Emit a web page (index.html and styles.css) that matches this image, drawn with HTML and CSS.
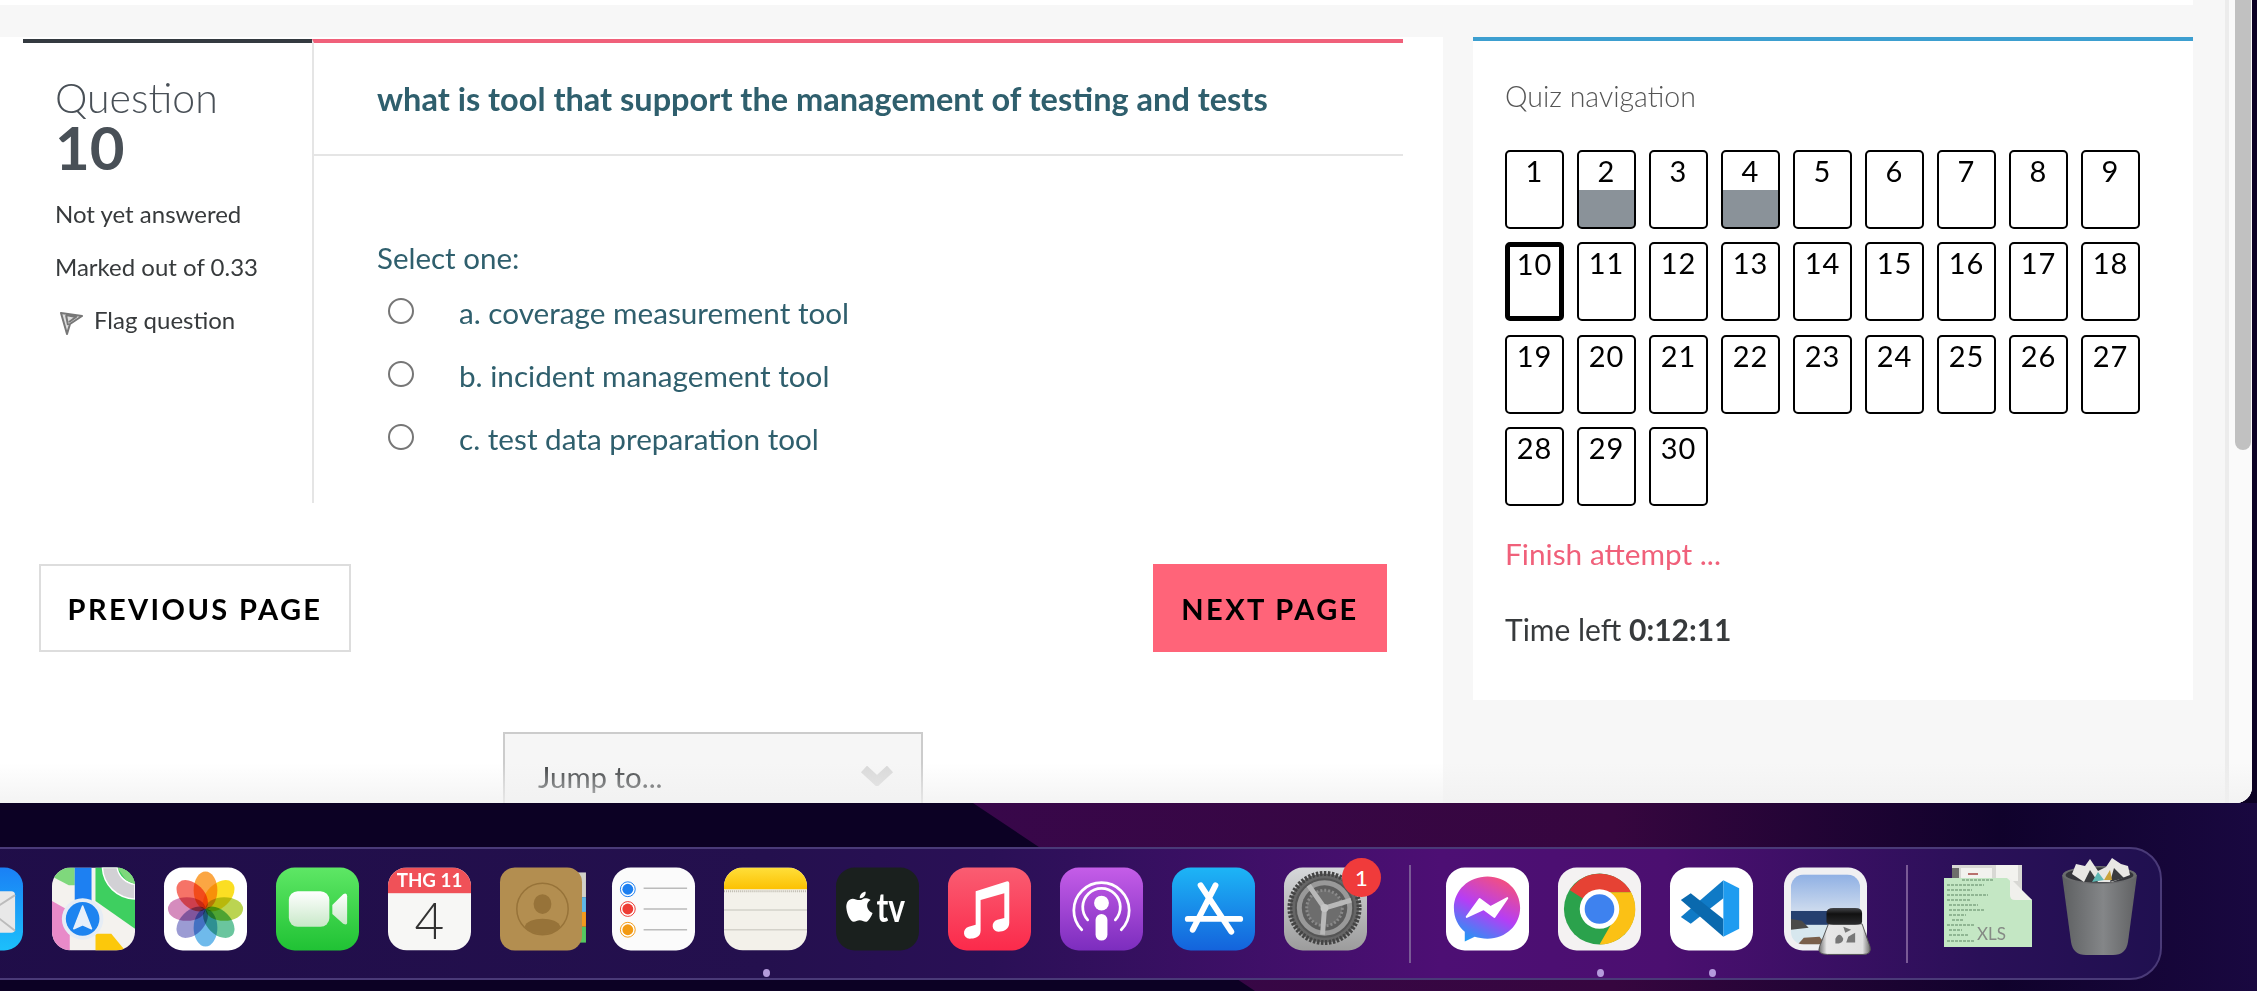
FILE: index.html
```html
<!DOCTYPE html>
<html lang="en">
<head>
    <meta charset="UTF-8">
    <title>Quiz attempt</title>
    <link rel="stylesheet" href="styles.css">
</head>
<body>
    <!-- desktop wallpaper -->
    <svg class="wallpaper" viewBox="0 0 2257 991">
        <defs>
            <linearGradient id="wallPurple" gradientUnits="userSpaceOnUse" x1="970" y1="0" x2="2257" y2="0">
                <stop offset="0" stop-color="#38074a"/>
                <stop offset=".5" stop-color="#36063f"/>
                <stop offset=".8" stop-color="#10022c"/>
                <stop offset="1" stop-color="#190840"/>
            </linearGradient>
        </defs>
        <rect width="2257" height="991" fill="#0c0124"/>
        <polygon points="973,803 2257,803 2257,991 1255,991" fill="url(#wallPurple)"/>
    </svg>

    <div class="window">
        <div class="page">
            <div class="strip"></div>
            <div class="columns">
                <main class="main">
                    <section class="question">
                        <div class="info">
                            <h3 class="qno">Question <span>10</span></h3>
                            <p class="state">Not yet answered</p>
                            <p class="state">Marked out of 0.33</p>
                            <p class="state flag">
                                <svg class="flag-icon" viewBox="0 0 24 24"><path d="M2 2 L23 5 L11 13 L8 23 Z M7 4 L9 14 M7 4 L17 6 L10 11" fill="#ddd" stroke="#777" stroke-width="2" stroke-linejoin="round"/></svg>
                                Flag question
                            </p>
                        </div>
                        <div class="content">
                            <div class="qtext">what is tool that support the management of testing and tests</div>
                            <div class="answers">
                                <div class="prompt">Select one:</div>
                                <label class="option"><span class="radio"></span>a. coverage measurement tool</label>
                                <label class="option"><span class="radio"></span>b. incident management tool</label>
                                <label class="option"><span class="radio"></span>c. test data preparation tool</label>
                            </div>
                        </div>
                    </section>
                    <div class="page-nav">
                        <a class="btn btn-prev">PREVIOUS PAGE</a>
                        <a class="btn btn-next">NEXT PAGE</a>
                    </div>
                    <div class="jump">
                        Jump to...
                        <svg class="chevron" viewBox="0 0 34 20"><polyline points="4,3 17,15 30,3" fill="none" stroke="#d8d8d8" stroke-width="9"/></svg>
                    </div>
                </main>
                <aside class="side">
                    <h4 class="nav-title">Quiz navigation</h4>
                    <div class="nav-grid">
                        <a class="cell">1</a>
                        <a class="cell answered">2</a>
                        <a class="cell">3</a>
                        <a class="cell answered">4</a>
                        <a class="cell">5</a>
                        <a class="cell">6</a>
                        <a class="cell">7</a>
                        <a class="cell">8</a>
                        <a class="cell">9</a>
                        <a class="cell current">10</a>
                        <a class="cell">11</a>
                        <a class="cell">12</a>
                        <a class="cell">13</a>
                        <a class="cell">14</a>
                        <a class="cell">15</a>
                        <a class="cell">16</a>
                        <a class="cell">17</a>
                        <a class="cell">18</a>
                        <a class="cell">19</a>
                        <a class="cell">20</a>
                        <a class="cell">21</a>
                        <a class="cell">22</a>
                        <a class="cell">23</a>
                        <a class="cell">24</a>
                        <a class="cell">25</a>
                        <a class="cell">26</a>
                        <a class="cell">27</a>
                        <a class="cell">28</a>
                        <a class="cell">29</a>
                        <a class="cell">30</a>
                    </div>
                    <a class="finish">Finish attempt ...</a>
                    <div class="timer">Time left <b>0:12:11</b></div>
                </aside>
            </div>
        </div>
        <div class="scrollbar"><div class="thumb"></div></div>
    </div>

    <div class="dock">
        <!-- mail -->
        <div class="app">
            <svg viewBox="0 0 84 84">
                <defs><linearGradient id="mailBg" x1="0" y1="0" x2="0" y2="1"><stop offset="0" stop-color="#1a80f5"/><stop offset="1" stop-color="#1cc0fb"/></linearGradient></defs>
                <rect width="84" height="84" rx="19" fill="url(#mailBg)"/>
                <rect x="8" y="24" width="68" height="42" rx="4" fill="#e8e8e8"/>
                <path d="M8 28 L42 50 L76 28 M8 64 L34 44 M76 64 L50 44" fill="none" stroke="#bbb" stroke-width="2"/>
            </svg>
        </div>
        <!-- maps -->
        <div class="app">
            <svg viewBox="0 0 84 84">
                <clipPath id="mapsClip"><rect width="84" height="84" rx="19"/></clipPath>
                <g clip-path="url(#mapsClip)">
                    <rect width="84" height="84" fill="#f4f2ee"/>
                    <polygon points="0,0 23,0 23,18 17,18 0,9" fill="#7fd87c"/>
                    <polygon points="44,0 84,0 84,62 44,34" fill="#3ecf60"/>
                    <path d="M51 0 C52 18 66 31 84 32 V17 C75 16 67 9 66 0 Z" fill="#d2d1d5" stroke="#fff" stroke-width="1.500"/>
                    <polygon points="66,0 84,0 84,17 75,13" fill="#7fd87c"/>
                    <rect x="23" y="0" width="17" height="36" fill="#1d80f2"/>
                    <polygon points="0,34 18,44 18,84 0,84" fill="#e88ac9"/>
                    <polygon points="44,67 60,67 74,84 44,84" fill="#fcc80b"/>
                    <circle cx="31" cy="52" r="21" fill="#e6edf5"/>
                    <circle cx="31" cy="52" r="17" fill="#1d84f0"/>
                    <polygon points="31,39 40,62 31,58 22,62" fill="#e8f0fa" stroke="#e8f0fa" stroke-linejoin="round" stroke-width="1.500"/>
                </g>
            </svg>
        </div>
        <!-- photos -->
        <div class="app">
            <svg viewBox="0 0 84 84">
                <rect width="84" height="84" rx="19" fill="#fff"/>
                <ellipse class="petal" cx="42" cy="23" rx="12" ry="19" fill="#fb9f33"/>
                <ellipse class="petal" cx="42" cy="23" rx="12" ry="19" fill="#fbdc10" transform="rotate(45 42 42)"/>
                <ellipse class="petal" cx="42" cy="23" rx="12" ry="19" fill="#b5d142" transform="rotate(90 42 42)"/>
                <ellipse class="petal" cx="42" cy="23" rx="12" ry="19" fill="#5dc096" transform="rotate(135 42 42)"/>
                <ellipse class="petal" cx="42" cy="23" rx="12" ry="19" fill="#63b4ea" transform="rotate(180 42 42)"/>
                <ellipse class="petal" cx="42" cy="23" rx="12" ry="19" fill="#9392d0" transform="rotate(225 42 42)"/>
                <ellipse class="petal" cx="42" cy="23" rx="12" ry="19" fill="#d282b8" transform="rotate(270 42 42)"/>
                <ellipse class="petal" cx="42" cy="23" rx="12" ry="19" fill="#f6675a" transform="rotate(315 42 42)"/>
            </svg>
        </div>
        <!-- facetime -->
        <div class="app">
            <svg viewBox="0 0 84 84">
                <defs><linearGradient id="ftBg" x1="0" y1="0" x2="0" y2="1"><stop offset="0" stop-color="#5ee765"/><stop offset="1" stop-color="#20c234"/></linearGradient>
                <linearGradient id="ftCam" x1="0" y1="0" x2="0" y2="1"><stop offset="0" stop-color="#fff"/><stop offset="1" stop-color="#c8e8c8"/></linearGradient></defs>
                <rect width="84" height="84" rx="19" fill="url(#ftBg)"/>
                <rect x="13" y="24" width="41" height="36" rx="9" fill="url(#ftCam)"/>
                <path d="M57 38 L68 27 Q72 25 72 29 V56 Q72 59 68 57 L57 47 Z" fill="url(#ftCam)"/>
            </svg>
        </div>
        <!-- calendar -->
        <div class="app">
            <svg viewBox="0 0 84 84">
                <clipPath id="calClip"><rect width="84" height="84" rx="19"/></clipPath>
                <g clip-path="url(#calClip)">
                    <rect width="84" height="84" fill="#f7f7f5"/>
                    <rect width="84" height="26" fill="#f05158"/>
                </g>
                <text x="42" y="20" class="cal-month">THG 11</text>
                <text x="42" y="72" class="cal-day">4</text>
            </svg>
        </div>
        <!-- contacts -->
        <div class="app">
            <svg viewBox="0 0 84 84">
                <rect x="76" y="5" width="11" height="25" fill="#d2d1c9"/>
                <rect x="76" y="30" width="11" height="15" fill="#5fb7e8"/>
                <rect x="76" y="45" width="11" height="15" fill="#f39a1e"/>
                <rect x="76" y="60" width="11" height="16" fill="#55c860"/>
                <rect width="83" height="84" rx="15" fill="#b38e50"/>
                <circle cx="43" cy="42" r="26" fill="none" stroke="#977339" stroke-width="1.500"/>
                <ellipse cx="43" cy="37" rx="9" ry="10" fill="#977339"/>
                <path d="M25 60 C27 49 59 49 61 60 C55 70 31 70 25 60 Z" fill="#977339"/>
            </svg>
        </div>
        <!-- reminders -->
        <div class="app">
            <svg viewBox="0 0 84 84">
                <rect width="84" height="84" rx="19" fill="#fbfbfb"/>
                <circle cx="16" cy="22" r="7.500" fill="#fff" stroke="#1c7ff0"/><circle cx="16" cy="22" r="5.500" fill="#1c7ff0"/>
                <circle cx="16" cy="42" r="7.500" fill="#fff" stroke="#ee3c34"/><circle cx="16" cy="42" r="5.500" fill="#ee3c34"/>
                <circle cx="16" cy="63" r="7.500" fill="#fff" stroke="#f29a14"/><circle cx="16" cy="63" r="5.500" fill="#f29a14"/>
                <path d="M32 21 H76 M32 42 H76 M32 63 H76" stroke="#bbb" stroke-width="1.600"/>
            </svg>
        </div>
        <!-- notes -->
        <div class="app">
            <svg viewBox="0 0 84 84">
                <defs><linearGradient id="notesTop" x1="0" y1="0" x2="0" y2="1"><stop offset="0" stop-color="#ffdf3a"/><stop offset="1" stop-color="#fcc102"/></linearGradient></defs>
                <clipPath id="notesClip"><rect width="84" height="84" rx="19"/></clipPath>
                <g clip-path="url(#notesClip)">
                    <rect width="84" height="84" fill="#f3f1ea"/>
                    <rect width="84" height="22" fill="url(#notesTop)"/>
                    <path d="M0 24 H84" stroke="#bdb9ae" stroke-width="2" stroke-dasharray="1 1"/>
                    <path d="M0 43 H84 M0 63 H84" stroke="#d4d2ca" stroke-width="1.400"/>
                </g>
            </svg>
            <span class="dot"></span>
        </div>
        <!-- tv -->
        <div class="app">
            <svg viewBox="0 0 84 84">
                <rect width="84" height="84" rx="19" fill="#1a201e"/>
                <path d="M24 33 C21 33 19 31.500 17 31.500 C13 31.500 10 35 10.500 41 C11 47 14.500 55 18 55 C20 55 21.500 53.500 24 53.500 C26.500 53.500 28 55 30 55 C33 55 36 49 37 46 C33 44.500 31.500 41 31.500 38.500 C31.500 36 33 34 35 33 C33 31 31 31 29.500 31 C27.500 31 26 33 24 33 Z M24 31 C24 27 27 24.500 30 24.500 C30.500 28 27.500 31.500 24 31 Z" fill="#fff"/>
                <text x="41" y="55" class="tv-label" textLength="29" lengthAdjust="spacingAndGlyphs">tv</text>
            </svg>
        </div>
        <!-- music -->
        <div class="app">
            <svg viewBox="0 0 84 84">
                <defs><linearGradient id="musicBg" x1="0" y1="0" x2="0" y2="1"><stop offset="0" stop-color="#fa5d72"/><stop offset="1" stop-color="#fb2a4b"/></linearGradient></defs>
                <rect width="84" height="84" rx="19" fill="url(#musicBg)"/>
                <path d="M28 24 L60 14 Q62 14 62 16 V56 C62 63 56 65 51 65 C44 65 43 55 50 53 L57 51 V26 L33 33 V64 C33 71 26 72 22 72 C15 72 14 62 21 60 L28 58 Z" fill="#fff"/>
            </svg>
        </div>
        <!-- podcasts -->
        <div class="app">
            <svg viewBox="0 0 84 84">
                <defs><linearGradient id="podBg" x1="0" y1="0" x2="0" y2="1"><stop offset="0" stop-color="#c55de8"/><stop offset="1" stop-color="#7c2dbe"/></linearGradient></defs>
                <rect width="84" height="84" rx="19" fill="url(#podBg)"/>
                <path d="M28 53 A19 19 0 1 1 56 53 M22 63 A28 28 0 1 1 62 63" fill="none" stroke="#fff" stroke-width="2.800" stroke-linecap="round"/>
                <circle cx="42" cy="36" r="7.500" fill="#fff"/>
                <rect x="36" y="47" width="12" height="27" rx="6" fill="#fff"/>
            </svg>
        </div>
        <!-- app store -->
        <div class="app">
            <svg viewBox="0 0 84 84">
                <defs><linearGradient id="storeBg" x1="0" y1="0" x2="0" y2="1"><stop offset="0" stop-color="#1db5f6"/><stop offset="1" stop-color="#1463dc"/></linearGradient></defs>
                <rect width="84" height="84" rx="19" fill="url(#storeBg)"/>
                <path d="M44 18 L21 63 M29 18 L60 65 M16 52 H69" fill="none" stroke="#fff" stroke-width="6" stroke-linecap="round"/>
            </svg>
        </div>
        <!-- system preferences -->
        <div class="app">
            <svg viewBox="0 0 84 84">
                <defs><linearGradient id="sysBg" x1="0" y1="0" x2="0" y2="1"><stop offset="0" stop-color="#d6d8da"/><stop offset="1" stop-color="#9c9c9c"/></linearGradient></defs>
                <rect width="84" height="84" rx="19" fill="url(#sysBg)"/>
                <circle cx="41" cy="41" r="35" fill="#666" stroke="#444" stroke-width="5" stroke-dasharray="2.500 1.500"/>
                <circle cx="41" cy="41" r="29" fill="#999" stroke="#555" stroke-width="2"/>
                <circle cx="41" cy="41" r="23" fill="#5d5d5d"/>
                <circle cx="41" cy="41" r="18" fill="#6d6d6d" stroke="#8a8a8a" stroke-width="3" stroke-dasharray="2 2"/>
                <path d="M41 41 L25 18 M41 41 L68 33 M41 41 L39 68" stroke="#b8b8b8" stroke-width="5"/>
                <circle cx="41" cy="41" r="4" fill="#c4c4c4"/>
            </svg>
            <span class="badge">1</span>
        </div>
        <div class="divider divider-first"></div>
        <!-- messenger -->
        <div class="app">
            <svg viewBox="0 0 84 84">
                <defs><linearGradient id="msgBg" x1=".7" y1="0" x2=".2" y2="1"><stop offset="0" stop-color="#f5507c"/><stop offset=".5" stop-color="#b53ef5"/><stop offset="1" stop-color="#1c9bf5"/></linearGradient></defs>
                <rect width="84" height="84" rx="19" fill="#fff"/>
                <path d="M42 9 C23 9 8 23 8 41 C8 51 12 59 19 65 V75 L29 70 C33 71 37 72 42 72 C61 72 75 58 75 41 C75 23 61 9 42 9 Z" fill="url(#msgBg)"/>
                <path d="M21 50 L34 32 L45 40 L62 31 L49 50 L38 42 Z" fill="#fff" stroke="#fff" stroke-linejoin="round" stroke-width="2"/>
            </svg>
        </div>
        <!-- chrome -->
        <div class="app">
            <svg viewBox="0 0 84 84">
                <rect width="84" height="84" rx="19" fill="#f4f2f2"/>
                <circle cx="42" cy="42" r="36" fill="#2ba24c"/>
                <path d="M42 42 L12 23 A36 36 0 0 1 74 25 H42 Z" fill="#e64234"/>
                <path d="M74 25 A36 36 0 0 1 42 78 L58 50 L42 25 Z" fill="#fbc115"/>
                <circle cx="42" cy="42" r="20" fill="#fff"/>
                <circle cx="42" cy="42" r="15" fill="#3e82ef"/>
            </svg>
            <span class="dot"></span>
        </div>
        <!-- vscode -->
        <div class="app">
            <svg viewBox="0 0 84 84">
                <rect width="84" height="84" rx="19" fill="#fff"/>
                <path d="M54 13 V31 L21 57 L11 50 Z" fill="#0f7ac6"/>
                <path d="M54 70 V52 L21 26 L11 33 Z" fill="#0a69ae"/>
                <path d="M54 13 L70 21 V62 L54 70 Z" fill="#1f9cf0"/>
            </svg>
            <span class="dot"></span>
        </div>
        <!-- preview -->
        <div class="app app-preview">
            <svg viewBox="0 0 84 84">
                <defs><linearGradient id="prevSky" x1="0" y1="0" x2="0" y2="1"><stop offset="0" stop-color="#8fb0e4"/><stop offset="1" stop-color="#cfdcee"/></linearGradient>
                <linearGradient id="prevCap" x1="0" y1="0" x2="0" y2="1"><stop offset="0" stop-color="#44464a"/><stop offset=".35" stop-color="#111"/><stop offset="1" stop-color="#2a2b2d"/></linearGradient>
                <linearGradient id="prevGlass" x1="0" y1="0" x2="1" y2="0"><stop offset="0" stop-color="#6f6f6f"/><stop offset=".15" stop-color="#e8e8e8"/><stop offset=".85" stop-color="#e0e0e0"/><stop offset="1" stop-color="#6a6a6a"/></linearGradient>
                <clipPath id="prevPhoto"><rect x="7" y="7" width="70" height="71" rx="13"/></clipPath></defs>
                <rect width="84" height="84" rx="19" fill="#f0f0f2"/>
                <g clip-path="url(#prevPhoto)">
                    <rect x="7" y="7" width="70" height="38" fill="url(#prevSky)"/>
                    <rect x="7" y="44" width="70" height="15" fill="#26406f"/>
                    <rect x="7" y="58" width="70" height="20" fill="#d7e7ee"/>
                    <path d="M7 52 L18 54 L25 61 L7 63 Z" fill="#4a4a48"/>
                    <path d="M14 78 L20 71 L36 70 L42 78 Z" fill="#7a5f4a"/>
                </g>
                <path d="M45 57 H79 L87 80 Q89 88 80 88 H44 Q33 88 36 80 Z" fill="url(#prevGlass)" stroke="#555"/>
                <path d="M52 72 Q56 64 60 72 Q60 77 52 77 Z M65 70 L72 66 L72 76 L63 76 Z M60 60 L68 63 L62 66 Z" fill="#777"/>
                <path d="M43 46 Q43 41 50 41 H72 Q79 41 79 46 V55 Q79 58 72 58 H50 Q43 58 43 55 Z" fill="url(#prevCap)"/>
            </svg>
        </div>
        <div class="divider divider-second"></div>
        <!-- xls file -->
        <div class="app app-file">
            <svg viewBox="0 0 88 84">
                <path d="M8 0 H78 V30 H8 Z" fill="#d8d8d4"/>
                <path d="M17 3 H48 V14 H17 Z M52 0 H74 V16 H52 Z" fill="#f2f2ee"/>
                <path d="M8 3 H15 V14 H8 Z" fill="#6d6d6b"/>
                <path d="M24 8 H34 V10 H24 Z" fill="#b8716d"/>
                <path d="M0 13 H63 L88 35 V82 H0 Z" fill="#c4e7c4"/>
                <path d="M63 13 Q66 13 66 16 V30 Q66 35 71 35 H88 L66 13 Z" fill="#f0f0ec"/>
                <path d="M18 15 H50 M3 20 H40 M3 25 H28 M3 30 H44 M3 35 H26 M5 40 H34 M5 45 H40 M5 50 H22 M8 55 H20 M3 60 H30 M5 65 H18 M5 70 H24 M3 76 H30" stroke="#7fa683" stroke-width="1.300" stroke-dasharray="3 1"/>
                <text x="33" y="75" class="file-label">XLS</text>
            </svg>
        </div>
        <!-- trash -->
        <div class="app app-trash">
            <svg viewBox="0 0 75 97">
                <defs><linearGradient id="trashBg" x1="0" y1="0" x2="1" y2="0"><stop offset="0" stop-color="#5d5f61"/><stop offset=".55" stop-color="#848688"/><stop offset="1" stop-color="#606163"/></linearGradient></defs>
                <path d="M0 17 L9 84 Q11 97 24 97 H51 Q64 97 66 84 L75 17 Z" fill="url(#trashBg)"/>
                <ellipse cx="37.500" cy="17" rx="37" ry="9" fill="#6b6c6e"/>
                <ellipse cx="37.500" cy="17" rx="34" ry="7.500" fill="#34353a"/>
                <path d="M10 16 L14 6 L23 8 L28 1 L36 13 L44 9 L50 0 L59 6 L66 8 L68 17 L50 24 L22 24 Z" fill="#e8e7e4"/>
                <path d="M22 24 L28 12 L36 24 Z M48 24 L52 10 L62 20 Z" fill="#3a3b3e"/>
                <path d="M30 24 L36 14 L42 22 Z" fill="#5fb8b4"/>
                <path d="M42 22 L48 12 L50 22 Z" fill="#c9a23a"/>
            </svg>
        </div>
    </div>
</body>
</html>
```

FILE: styles.css
```css
* {
    box-sizing: border-box;
}
html, body {
    margin: 0;
    height: 991px;
    overflow: hidden;
}
body {
    position: relative;
    font-family: Lato, "Open Sans", sans-serif;
    color: #373a3c;
    background: #0c0124;
}
.wallpaper {
    position: absolute;
    top: 0;
    left: 0;
    width: 2257px;
    height: 991px;
}

/* browser window */
.window {
    position: relative;
    display: flex;
    width: 2252px;
    height: 803px;
    overflow: hidden;
    background: #f7f7f7;
    border-bottom-right-radius: 16px;
}
.window::after {
    content: "";
    position: absolute;
    left: 0;
    right: 0;
    bottom: 0;
    height: 40px;
    background: linear-gradient(rgba(240, 240, 240, 0), rgba(240, 240, 240, .75));
}
.page {
    width: 2225px;
}
.strip {
    height: 5px;
    margin-right: 32px;
    background: #fff;
}
.columns {
    display: flex;
    gap: 30px;
    padding-top: 32px;
}
.main {
    width: 1443px;
    height: 766px;
    padding-top: 2px;
    background: #fff;
}
.side {
    width: 720px;
    height: 663px;
    padding: 0 32px;
    background: #fff;
    border-top: 4px solid #3d9fd0;
}
.scrollbar {
    width: 27px;
    padding-left: 6px;
    background: #fafafa;
    border-left: 4px solid #ececec;
}
.thumb {
    width: 16px;
    height: 450px;
    background: #c1c1c1;
    border-radius: 0 0 8px 8px;
}

/* question */
.question {
    display: flex;
    height: 464px;
    margin-left: 23px;
}
.info {
    width: 289px;
    padding-left: 32px;
    border-top: 4px solid #343a40;
}
.qno {
    margin: 35px 0 21px;
    font-size: 41px;
    font-weight: 300;
    line-height: 40px;
    color: #495057;
}
.qno span {
    display: block;
    font-size: 60px;
    font-weight: 700;
    line-height: 58px;
}
.state {
    margin: 0 0 19px;
    font-size: 24px;
    line-height: 34px;
}
.flag {
    display: flex;
    align-items: center;
    gap: 11px;
}
.flag-icon {
    width: 24px;
    height: 24px;
    margin: 6px 0 0 4px;
}
.content {
    flex: none;
    width: 1091px;
    border-top: 4px solid #f0607a;
    border-left: 2px solid #e5e5e5;
}
.qtext {
    height: 113px;
    padding: 37px 0 0 63px;
    font-size: 32.5px;
    font-weight: 700;
    line-height: 38px;
    color: #2f5f6d;
    border-bottom: 2px solid #e5e5e5;
}
.answers {
    padding: 84px 0 0 63px;
    font-size: 29.7px;
    color: #2f5f6d;
}
.prompt {
    margin-bottom: 5px;
    font-size: 29.5px;
    line-height: 36px;
}
.option {
    display: flex;
    align-items: center;
    height: 63px;
}
.radio {
    width: 26px;
    height: 26px;
    margin: -4px 45px 0 11px;
    border: 2px solid #767676;
    border-radius: 50%;
    background: #fff;
}

/* buttons */
.page-nav {
    display: flex;
    justify-content: space-between;
    margin-top: 61px;
    padding: 0 56px 0 39px;
}
.btn {
    display: flex;
    align-items: center;
    justify-content: center;
    height: 88px;
    font-size: 29px;
    font-weight: 700;
    letter-spacing: 2.4px;
    color: #000;
}
.btn-prev {
    width: 312px;
    background: #fff;
    border: 2px solid #ddd;
}
.btn-next {
    width: 234px;
    background: #ff6479;
}
.jump {
    display: flex;
    align-items: center;
    justify-content: space-between;
    width: 420px;
    height: 88px;
    margin: 80px 0 0 503px;
    padding: 0 27px 0 33px;
    font-size: 29.4px;
    background: #f6f6f6;
    border: 2px solid #ccc;
}
.chevron {
    width: 34px;
    height: 20px;
}

/* quiz navigation */
.nav-title {
    margin: 0;
    padding-top: 37px;
    font-size: 28.5px;
    font-weight: 300;
    line-height: 36px;
    color: #555;
}
.nav-grid {
    display: grid;
    grid-template-columns: repeat(9, 59px);
    grid-auto-rows: 79px;
    column-gap: 13px;
    row-gap: 13.3px;
    margin-top: 36px;
}
.cell {
    padding-top: 2px;
    font-size: 29px;
    line-height: 34px;
    text-align: center;
    letter-spacing: 1px;
    color: #000;
    background: #fff;
    border: 2px solid #000;
    border-radius: 5px;
}
.answered {
    background: linear-gradient(#fff 0, #fff 38px, #8a9299 38px);
}
.current {
    padding-top: 0;
    border-width: 5px;
}
.finish {
    display: block;
    margin-top: 28px;
    font-size: 29.8px;
    line-height: 40px;
    color: #f0607a;
}
.timer {
    margin-top: 35px;
    font-size: 30px;
    line-height: 40px;
}

/* dock */
.dock {
    position: relative;
    display: flex;
    align-items: flex-start;
    gap: 29px;
    width: 2253px;
    height: 133px;
    margin: 44px 0 0 -91px;
    padding: 18px 0 0 29px;
    background: linear-gradient(90deg, #1f0d48 0, #24104e 38%, #2a1056 48%, #4d0f74 68%, #4b0f70 78%, #2a1058 92%, #201050 100%);
    border: 2px solid #4a3a78;
    border-radius: 32px;
}
.app {
    position: relative;
    flex: none;
    width: 83px;
    height: 84px;
}
.app svg {
    display: block;
    width: 100%;
    height: 100%;
    overflow: visible;
}
.petal {
    mix-blend-mode: multiply;
    opacity: .92;
}
.app-preview {
    margin-left: 2px;
}
.app-file {
    width: 88px;
    margin: -2px 0 0 7px;
}
.app-trash {
    width: 75px;
    height: 97px;
    margin: -9px 0 0 1px;
}
.divider {
    flex: none;
    width: 2px;
    height: 98px;
    margin-top: -2px;
    background: #7a5a96;
}
.divider-first {
    margin-left: 13px;
    margin-right: 6px;
}
.divider-second {
    margin-left: 10px;
}
.dot {
    position: absolute;
    left: 39px;
    top: 102px;
    width: 7px;
    height: 8px;
    border-radius: 50%;
    background: #b59bdc;
}
.badge {
    position: absolute;
    top: -9px;
    left: 58px;
    width: 39px;
    height: 39px;
    font-size: 22px;
    font-weight: 500;
    line-height: 39px;
    text-align: center;
    color: #fff;
    background: #f03b3b;
    border-radius: 50%;
}
.cal-month {
    font-size: 19px;
    font-weight: 700;
    text-anchor: middle;
    fill: #fff;
}
.cal-day {
    font-size: 52px;
    font-weight: 300;
    text-anchor: middle;
    fill: #333;
}
.tv-label {
    font-size: 40px;
    font-weight: 700;
    fill: #fff;
}
.file-label {
    font-size: 17px;
    fill: #858a85;
}
```
